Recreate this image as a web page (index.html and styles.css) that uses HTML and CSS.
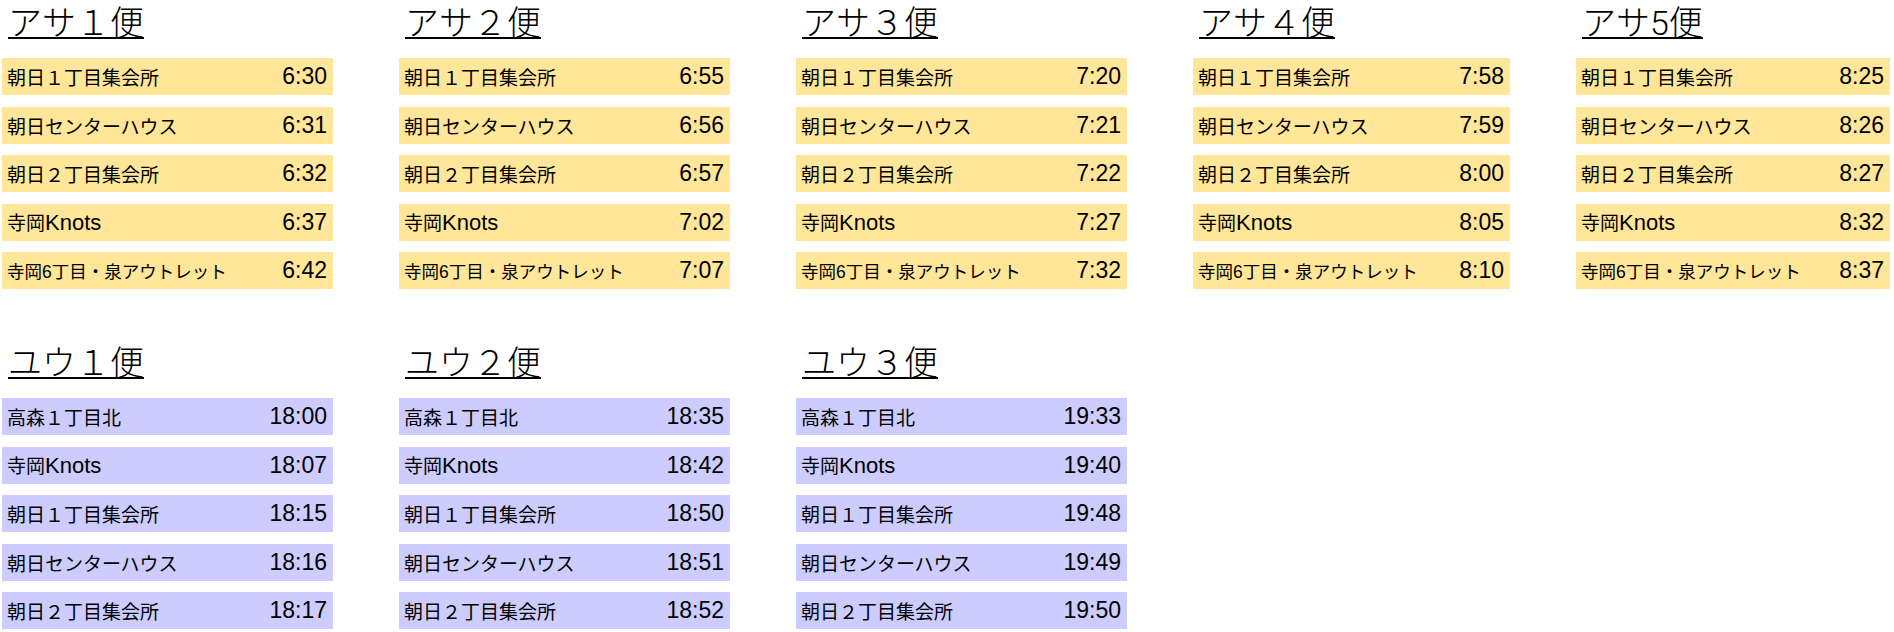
FILE: index.html
```html
<!DOCTYPE html>
<html lang="ja">
<head>
<meta charset="utf-8">
<title>便 時刻表</title>
<link rel="stylesheet" href="styles.css">
</head>
<body>
<div class="board">
  <section class="trip">
    <h2 class="trip-title">アサ１便</h2>
    <ul class="stops morning">
      <li class="stop"><span class="name">朝日１丁目集会所</span><span class="time">6:30</span></li>
      <li class="stop"><span class="name">朝日センターハウス</span><span class="time">6:31</span></li>
      <li class="stop"><span class="name">朝日２丁目集会所</span><span class="time">6:32</span></li>
      <li class="stop"><span class="name">寺岡<span class="en">Knots</span></span><span class="time">6:37</span></li>
      <li class="stop"><span class="name small">寺岡6丁目・泉アウトレット</span><span class="time">6:42</span></li>
    </ul>
  </section>
  <section class="trip">
    <h2 class="trip-title">アサ２便</h2>
    <ul class="stops morning">
      <li class="stop"><span class="name">朝日１丁目集会所</span><span class="time">6:55</span></li>
      <li class="stop"><span class="name">朝日センターハウス</span><span class="time">6:56</span></li>
      <li class="stop"><span class="name">朝日２丁目集会所</span><span class="time">6:57</span></li>
      <li class="stop"><span class="name">寺岡<span class="en">Knots</span></span><span class="time">7:02</span></li>
      <li class="stop"><span class="name small">寺岡6丁目・泉アウトレット</span><span class="time">7:07</span></li>
    </ul>
  </section>
  <section class="trip">
    <h2 class="trip-title">アサ３便</h2>
    <ul class="stops morning">
      <li class="stop"><span class="name">朝日１丁目集会所</span><span class="time">7:20</span></li>
      <li class="stop"><span class="name">朝日センターハウス</span><span class="time">7:21</span></li>
      <li class="stop"><span class="name">朝日２丁目集会所</span><span class="time">7:22</span></li>
      <li class="stop"><span class="name">寺岡<span class="en">Knots</span></span><span class="time">7:27</span></li>
      <li class="stop"><span class="name small">寺岡6丁目・泉アウトレット</span><span class="time">7:32</span></li>
    </ul>
  </section>
  <section class="trip">
    <h2 class="trip-title">アサ４便</h2>
    <ul class="stops morning">
      <li class="stop"><span class="name">朝日１丁目集会所</span><span class="time">7:58</span></li>
      <li class="stop"><span class="name">朝日センターハウス</span><span class="time">7:59</span></li>
      <li class="stop"><span class="name">朝日２丁目集会所</span><span class="time">8:00</span></li>
      <li class="stop"><span class="name">寺岡<span class="en">Knots</span></span><span class="time">8:05</span></li>
      <li class="stop"><span class="name small">寺岡6丁目・泉アウトレット</span><span class="time">8:10</span></li>
    </ul>
  </section>
  <section class="trip">
    <h2 class="trip-title">アサ5便</h2>
    <ul class="stops morning">
      <li class="stop"><span class="name">朝日１丁目集会所</span><span class="time">8:25</span></li>
      <li class="stop"><span class="name">朝日センターハウス</span><span class="time">8:26</span></li>
      <li class="stop"><span class="name">朝日２丁目集会所</span><span class="time">8:27</span></li>
      <li class="stop"><span class="name">寺岡<span class="en">Knots</span></span><span class="time">8:32</span></li>
      <li class="stop"><span class="name small">寺岡6丁目・泉アウトレット</span><span class="time">8:37</span></li>
    </ul>
  </section>

  <section class="trip">
    <h2 class="trip-title">ユウ１便</h2>
    <ul class="stops evening">
      <li class="stop"><span class="name">高森１丁目北</span><span class="time">18:00</span></li>
      <li class="stop"><span class="name">寺岡<span class="en">Knots</span></span><span class="time">18:07</span></li>
      <li class="stop"><span class="name">朝日１丁目集会所</span><span class="time">18:15</span></li>
      <li class="stop"><span class="name">朝日センターハウス</span><span class="time">18:16</span></li>
      <li class="stop"><span class="name">朝日２丁目集会所</span><span class="time">18:17</span></li>
    </ul>
  </section>
  <section class="trip">
    <h2 class="trip-title">ユウ２便</h2>
    <ul class="stops evening">
      <li class="stop"><span class="name">高森１丁目北</span><span class="time">18:35</span></li>
      <li class="stop"><span class="name">寺岡<span class="en">Knots</span></span><span class="time">18:42</span></li>
      <li class="stop"><span class="name">朝日１丁目集会所</span><span class="time">18:50</span></li>
      <li class="stop"><span class="name">朝日センターハウス</span><span class="time">18:51</span></li>
      <li class="stop"><span class="name">朝日２丁目集会所</span><span class="time">18:52</span></li>
    </ul>
  </section>
  <section class="trip">
    <h2 class="trip-title">ユウ３便</h2>
    <ul class="stops evening">
      <li class="stop"><span class="name">高森１丁目北</span><span class="time">19:33</span></li>
      <li class="stop"><span class="name">寺岡<span class="en">Knots</span></span><span class="time">19:40</span></li>
      <li class="stop"><span class="name">朝日１丁目集会所</span><span class="time">19:48</span></li>
      <li class="stop"><span class="name">朝日センターハウス</span><span class="time">19:49</span></li>
      <li class="stop"><span class="name">朝日２丁目集会所</span><span class="time">19:50</span></li>
    </ul>
  </section>
</div>
</body>
</html>
```

FILE: styles.css
```css
html, body {
  margin: 0;
  padding: 0;
  background: #ffffff;
}

body {
  padding: 0 2px;
  color: #000000;
  font-family: "Liberation Sans", "Noto Sans CJK JP", sans-serif;
}

.board {
  display: grid;
  grid-template-columns: 331px 331px 331px 317px 314px;
  column-gap: 66px;
  row-gap: 51px;
  align-items: start;
}

.trip {
  display: flex;
  flex-direction: column;
}

.trip-title {
  margin: 0 0 0 6px;
  font-family: Roboto, "Noto Sans CJK JP", sans-serif;
  font-size: 34px;
  font-weight: 300;
  line-height: 46px;
  text-decoration: underline;
  text-decoration-thickness: 2px;
  text-underline-offset: 2px;
  align-self: flex-start;
}

.stops {
  list-style: none;
  margin: 12px 0 0 0;
  padding: 0;
  display: flex;
  flex-direction: column;
  gap: 11.5px;
}

.stop {
  height: 37px;
  display: flex;
  align-items: center;
  justify-content: space-between;
  padding: 0 6px 0 5px;
}

.morning .stop {
  background: #ffe699;
}

.evening .stop {
  background: #ccccff;
}

.name {
  font-size: 19px;
  white-space: nowrap;
}

.name.small {
  font-size: 17.5px;
}

.en {
  font-size: 22px;
}

.time {
  font-size: 23px;
  white-space: nowrap;
}
```
